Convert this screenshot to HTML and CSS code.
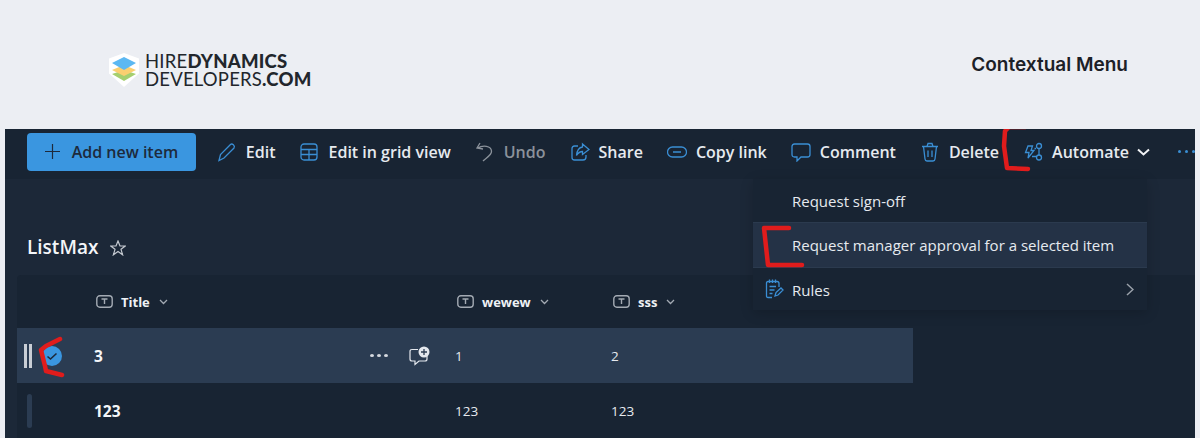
FILE: index.html
```html
<!DOCTYPE html>
<html lang="en">
<head>
<meta charset="utf-8">
<title>Contextual Menu</title>
<link rel="stylesheet" href="styles.css">
</head>
<body>
<header class="top">
  <div class="logo">
    <svg class="logo-mark" width="34" height="36" viewBox="0 0 34 36">
      <path d="M17 1 32 6.500V21.500L17 35 2 21.500V6.500Z" fill="#fff"/>
      <path d="M17 19 29 23 17 30 5 23Z" fill="#a6cf6f" transform="translate(0 -1)"/>
      <path d="M17 13 29 18 17 24 5 18Z" fill="#fbcf70"/>
      <path d="M17 5 29 11 17 18 5 11Z" fill="#5cb8f2"/>
    </svg>
    <div class="logo-text">
      <div class="logo-line">HIRE<b>DYNAMICS</b></div>
      <div class="logo-line">DEVELOPERS<b>.COM</b></div>
    </div>
  </div>
  <div class="top-title">Contextual Menu</div>
</header>

<main class="app">
  <nav class="bar">
    <button class="add"><svg width="15" height="15" viewBox="0 0 15 15"><path d="M7.500 0V15M0 7.500H15" stroke="#1d2a3c" stroke-width="1.200"/></svg><span>Add new item</span></button>
    <div class="cmd cmd-first"><svg class="ico" viewBox="0 0 20 20"><path d="M2 18.500 3.500 12.500 13.500 2.500C15 1 18.500 3.500 17 6L7 16Z" /></svg><span>Edit</span></div>
    <div class="cmd"><svg class="ico" viewBox="0 0 20 20"><rect x="2" y="2" width="16" height="16" rx="3"/><path d="M2 7.500H18M2 12.500H18M10 7.500V18"/></svg><span>Edit in grid view</span></div>
    <div class="cmd muted"><svg class="ico" viewBox="0 0 20 20"><path d="M5 1 2 6 8 7M2.500 6C8 3 16 3.500 16.500 9 17 13 11 16 8 19"/></svg><span>Undo</span></div>
    <div class="cmd"><svg class="ico" viewBox="0 0 20 20"><path d="M8 4H4.500Q2 4 2 6.500V15.500Q2 18 4.500 18H13Q16 18 16 15V13"/><path d="M12.500 2 19 7.500 12.500 12.500V9.500C9.500 9.500 8 11 6.500 13.500 7 8.500 9 5.500 12.500 5Z"/></svg><span>Share</span></div>
    <div class="cmd"><svg class="ico" viewBox="0 0 20 20"><path d="M7 5H5.500A5 5 0 0 0 5.500 15H14.500A5 5 0 0 0 14.500 5H7M6 10H14"/></svg><span>Copy link</span></div>
    <div class="cmd"><svg class="ico" viewBox="0 0 20 20"><path d="M3.500 2H16.500Q19 2 19 4.500V12.500Q19 15 16.500 15H10L6 19V15H3.500Q1 15 1 12.500V4.500Q1 2 3.500 2Z"/></svg><span>Comment</span></div>
    <div class="cmd"><svg class="ico" viewBox="0 0 20 20"><path d="M2 4.500H18M7 4.500 8 1.500H12L13 4.500M3.500 4.500 5 17Q5.200 19 7 19H13Q14.800 19 15 17L16.500 4.500M8 8.500V15M12 8.500V15"/></svg><span>Delete</span></div>
    <div class="cmd"><svg class="ico" viewBox="0 0 20 20"><path d="M5 4H9.500L8 8.500H11L5 16 6 10.500H2.500ZM13 6.500H11.500M13 14.500H9"/><circle cx="16" cy="4" r="2.500"/><circle cx="16" cy="15.500" r="2.500"/><path d="M16 6.500V13"/></svg><span>Automate</span><svg class="chev" width="13" height="8" viewBox="0 0 13 8"><path d="M1 1.500 6.500 6.500 12 1.500"/></svg></div>
    <div class="dots"><i></i><i></i><i></i></div>
  </nav>

  <h1 class="list-title">ListMax <svg class="star" width="16" height="16" viewBox="0 0 16 16"><path d="M8 1 10 6H15.300L11 9.300 12.600 14.800 8 11.500 3.400 14.800 5 9.300 .7 6H6Z"/></svg></h1>

  <section class="table">
    <div class="row head">
      <div></div>
      <div class="hcell"><svg class="tico" width="17" height="13" viewBox="0 0 17 13"><rect x=".8" y=".8" width="15.400" height="11.400" rx="3"/><path d="M5.500 4H11.500M8.500 4V9"/></svg><span>Title</span><svg class="hchev" width="9" height="6" viewBox="0 0 9 6"><path d="M1 1 4.500 4.500 8 1"/></svg></div>
      <div class="hcell"><svg class="tico" width="17" height="13" viewBox="0 0 17 13"><rect x=".8" y=".8" width="15.400" height="11.400" rx="3"/><path d="M5.500 4H11.500M8.500 4V9"/></svg><span>wewew</span><svg class="hchev" width="9" height="6" viewBox="0 0 9 6"><path d="M1 1 4.500 4.500 8 1"/></svg></div>
      <div class="hcell"><svg class="tico" width="17" height="13" viewBox="0 0 17 13"><rect x=".8" y=".8" width="15.400" height="11.400" rx="3"/><path d="M5.500 4H11.500M8.500 4V9"/></svg><span>sss</span><svg class="hchev" width="9" height="6" viewBox="0 0 9 6"><path d="M1 1 4.500 4.500 8 1"/></svg></div>
    </div>
    <div class="row item selected">
      <div class="lead"><span class="grip grip-on"></span><svg class="check" width="20" height="20" viewBox="0 0 20 20"><circle cx="10" cy="10" r="10" fill="#3a96e0"/><path d="M5.500 10.500 8.500 13 14.500 7.500" fill="none" stroke="#1d2a3c" stroke-width="1.600"/></svg></div>
      <div class="name-cell"><span class="name">3</span><span class="row-tools"><span class="row-dots"><i></i><i></i><i></i></span><svg width="21" height="20" viewBox="0 0 21 20"><path d="M9 3.500H3Q1 3.500 1 5.500V13Q1 15 3 15H6V18.500L10 15H16Q18 15 18 13V10" fill="none" stroke="#e4e8ee" stroke-width="1.200"/><circle cx="15" cy="6" r="5.500" fill="#e4e8ee"/><path d="M15 3V9M12 6H18" stroke="#2b3c52" stroke-width="1.300"/></svg></span></div>
      <div class="cell">1</div>
      <div class="cell">2</div>
    </div>
    <div class="row item">
      <div class="lead"><span class="grip"></span></div>
      <div class="name-cell"><span class="name">123</span></div>
      <div class="cell">123</div>
      <div class="cell">123</div>
    </div>
  </section>

  <div class="menu">
    <div class="menu-item">Request sign-off</div>
    <div class="menu-item active">Request manager approval for a selected item</div>
    <div class="menu-item rules">
      <svg class="rules-ico" width="19" height="20" viewBox="0 0 19 20"><path d="M4 2.500H12Q14 2.500 14 4.500V8M7 18.500H3Q1.500 18.500 1.500 17V4Q1.500 2.500 3 2.500H4M4.500 .5V4M7.500 .5V4M10.500 .5V4M4.500 7.500H11M4.500 11H9.500M4.500 14.500H7.500M10 17 11 13.500 16 9 18 11 13 16Z"/></svg>
      <span>Rules</span>
      <svg class="rules-chev" width="8" height="13" viewBox="0 0 8 13"><path d="M1 1 7 6.500 1 12"/></svg>
    </div>
  </div>

  <svg class="mark mark-auto" width="32" height="50" viewBox="0 0 32 50"><path d="M25 3H9L5 7 4 22 7 44 28 45"/></svg>
  <svg class="mark mark-menu" width="46" height="46" viewBox="0 0 46 46"><path d="M29 4H4L8 41H42"/></svg>
  <svg class="mark mark-row" width="28" height="42" viewBox="0 0 28 42"><path d="M22 3 8 10 3 14 7 30 8 35 24 39"/></svg>
</main>
</body>
</html>
```
FILE: styles.css
```css
* { box-sizing: border-box; }
html, body { margin: 0; height: 438px; overflow: hidden; }
body { background: #eceef3; font-family: "Open Sans", "Noto Sans", sans-serif; position: relative; }

.top { height: 129px; display: flex; align-items: center; justify-content: space-between; padding: 0 72px 0 107px; }
.logo { display: flex; align-items: center; gap: 4px; margin-top: 11px; }
.logo-mark { flex: none; }
.logo-text { font-family: Lato, sans-serif; font-size: 18.500px; line-height: 18px; color: #22262c; letter-spacing: .2px; }
.logo-line { white-space: nowrap; }
.logo-line b { font-weight: 900; }
.top-title { font-family: Inter, sans-serif; font-weight: 600; font-size: 19px; color: #1c2027; }

.app { position: relative; margin: 0 5px; height: 309px; background: #1c2838; overflow: hidden; color: #eef1f5; }

.bar { height: 50px; background: #18242f; background: #182433; display: flex; align-items: center; padding: 3px 0 0 22px; font-size: 16px; font-weight: 600; }
.add { width: 174px; height: 38px; margin-top: -8px; border: 0; border-radius: 4px; background: #3a96e0; color: #1d2a3c; display: flex; align-items: center; justify-content: center; gap: 12px; font: inherit; }
.cmd { display: flex; align-items: center; gap: 9px; margin-left: 24px; margin-top: -8px; white-space: nowrap; color: #e6eaef; }
.cmd-first { margin-left: 21px; }
.muted { color: #8b929b; }
.ico { width: 20px; height: 20px; flex: none; fill: none; stroke: #3a8ed4; stroke-width: 1.300; }
.muted .ico { stroke: #8b929b; }
.chev { fill: none; stroke: #f0f2f5; stroke-width: 2; margin-left: -1px; }
.dots { display: flex; gap: 4px; margin-left: 28px; margin-top: -8px; }
.dots i { width: 3px; height: 3px; border-radius: 50%; background: #3a8ed4; }

.list-title { margin: 0; height: 96px; padding: 52px 0 0 22px; font-size: 19px; line-height: 32px; font-weight: 600; color: #f4f6f9; display: flex; align-items: flex-start; gap: 4px; }
.star { margin: 9px 0 0 8px; fill: none; stroke: #c5cad1; stroke-width: 1.200; }

.table { margin-left: 12px; background: #182433; height: 163px; border-radius: 4px 0 0 0; }
.row { display: grid; grid-template-columns: 77px 361px 156px 1fr; align-items: center; }
.head { height: 53px; font-size: 13px; font-weight: 700; }
.hcell { display: flex; align-items: center; gap: 8px; padding-left: 2px; }
.tico { fill: none; stroke: #a3aab3; stroke-width: 1.400; flex: none; }
.hchev { fill: none; stroke: #a3aab3; stroke-width: 1.300; margin-left: 1px; }
.item { height: 55px; font-size: 13.500px; }
.selected { width: 896px; background: #2b3c52; }
.lead { display: flex; align-items: center; height: 100%; padding-left: 7px; gap: 10px; }
.grip { width: 5px; height: 34px; border-radius: 3px; background: #2b3c52; margin-left: 3px; }
.grip-on { width: 8px; height: 24px; margin-left: 0; border-radius: 0; background: linear-gradient(90deg, #c9ced5 0 3px, transparent 3px 5px, #c9ced5 5px 8px); }
.check { flex: none; }
.name-cell { display: flex; align-items: center; justify-content: space-between; padding-right: 25px; }
.name { font-weight: 700; font-size: 15.500px; color: #f4f6f9; }
.row-tools { display: flex; align-items: center; gap: 21px; }
.row-dots { display: flex; gap: 3px; }
.row-dots i { width: 4px; height: 3px; border-radius: 50%; background: #d6dae0; }
.cell { font-weight: 400; color: #e6eaef; }

.menu { position: absolute; left: 748px; top: 50px; width: 394px; height: 131px; background: #182433; box-shadow: 0 3px 12px rgba(0,0,0,.18); padding-top: 0; font-size: 15px; font-weight: 400; color: #e6eaef; }
.menu-item { height: 43px; padding-left: 39px; display: flex; align-items: center; }
.active { height: 46px; background: #243246; border-top: 1px solid #2b3a4e; border-bottom: 1px solid #2b3a4e; }
.rules { position: relative; }
.rules-ico { position: absolute; left: 12px; top: 11px; fill: none; stroke: #3a8ed4; stroke-width: 1.300; }
.rules-chev { position: absolute; right: 13px; top: 15px; fill: none; stroke: #9aa1aa; stroke-width: 1.500; }

.mark { position: absolute; fill: none; stroke: #e01c1c; stroke-width: 4.500; stroke-linecap: round; stroke-linejoin: round; }
.mark-auto { left: 995px; top: -5px; }
.mark-menu { left: 755px; top: 95px; }
.mark-row { left: 33px; top: 207px; }
```
